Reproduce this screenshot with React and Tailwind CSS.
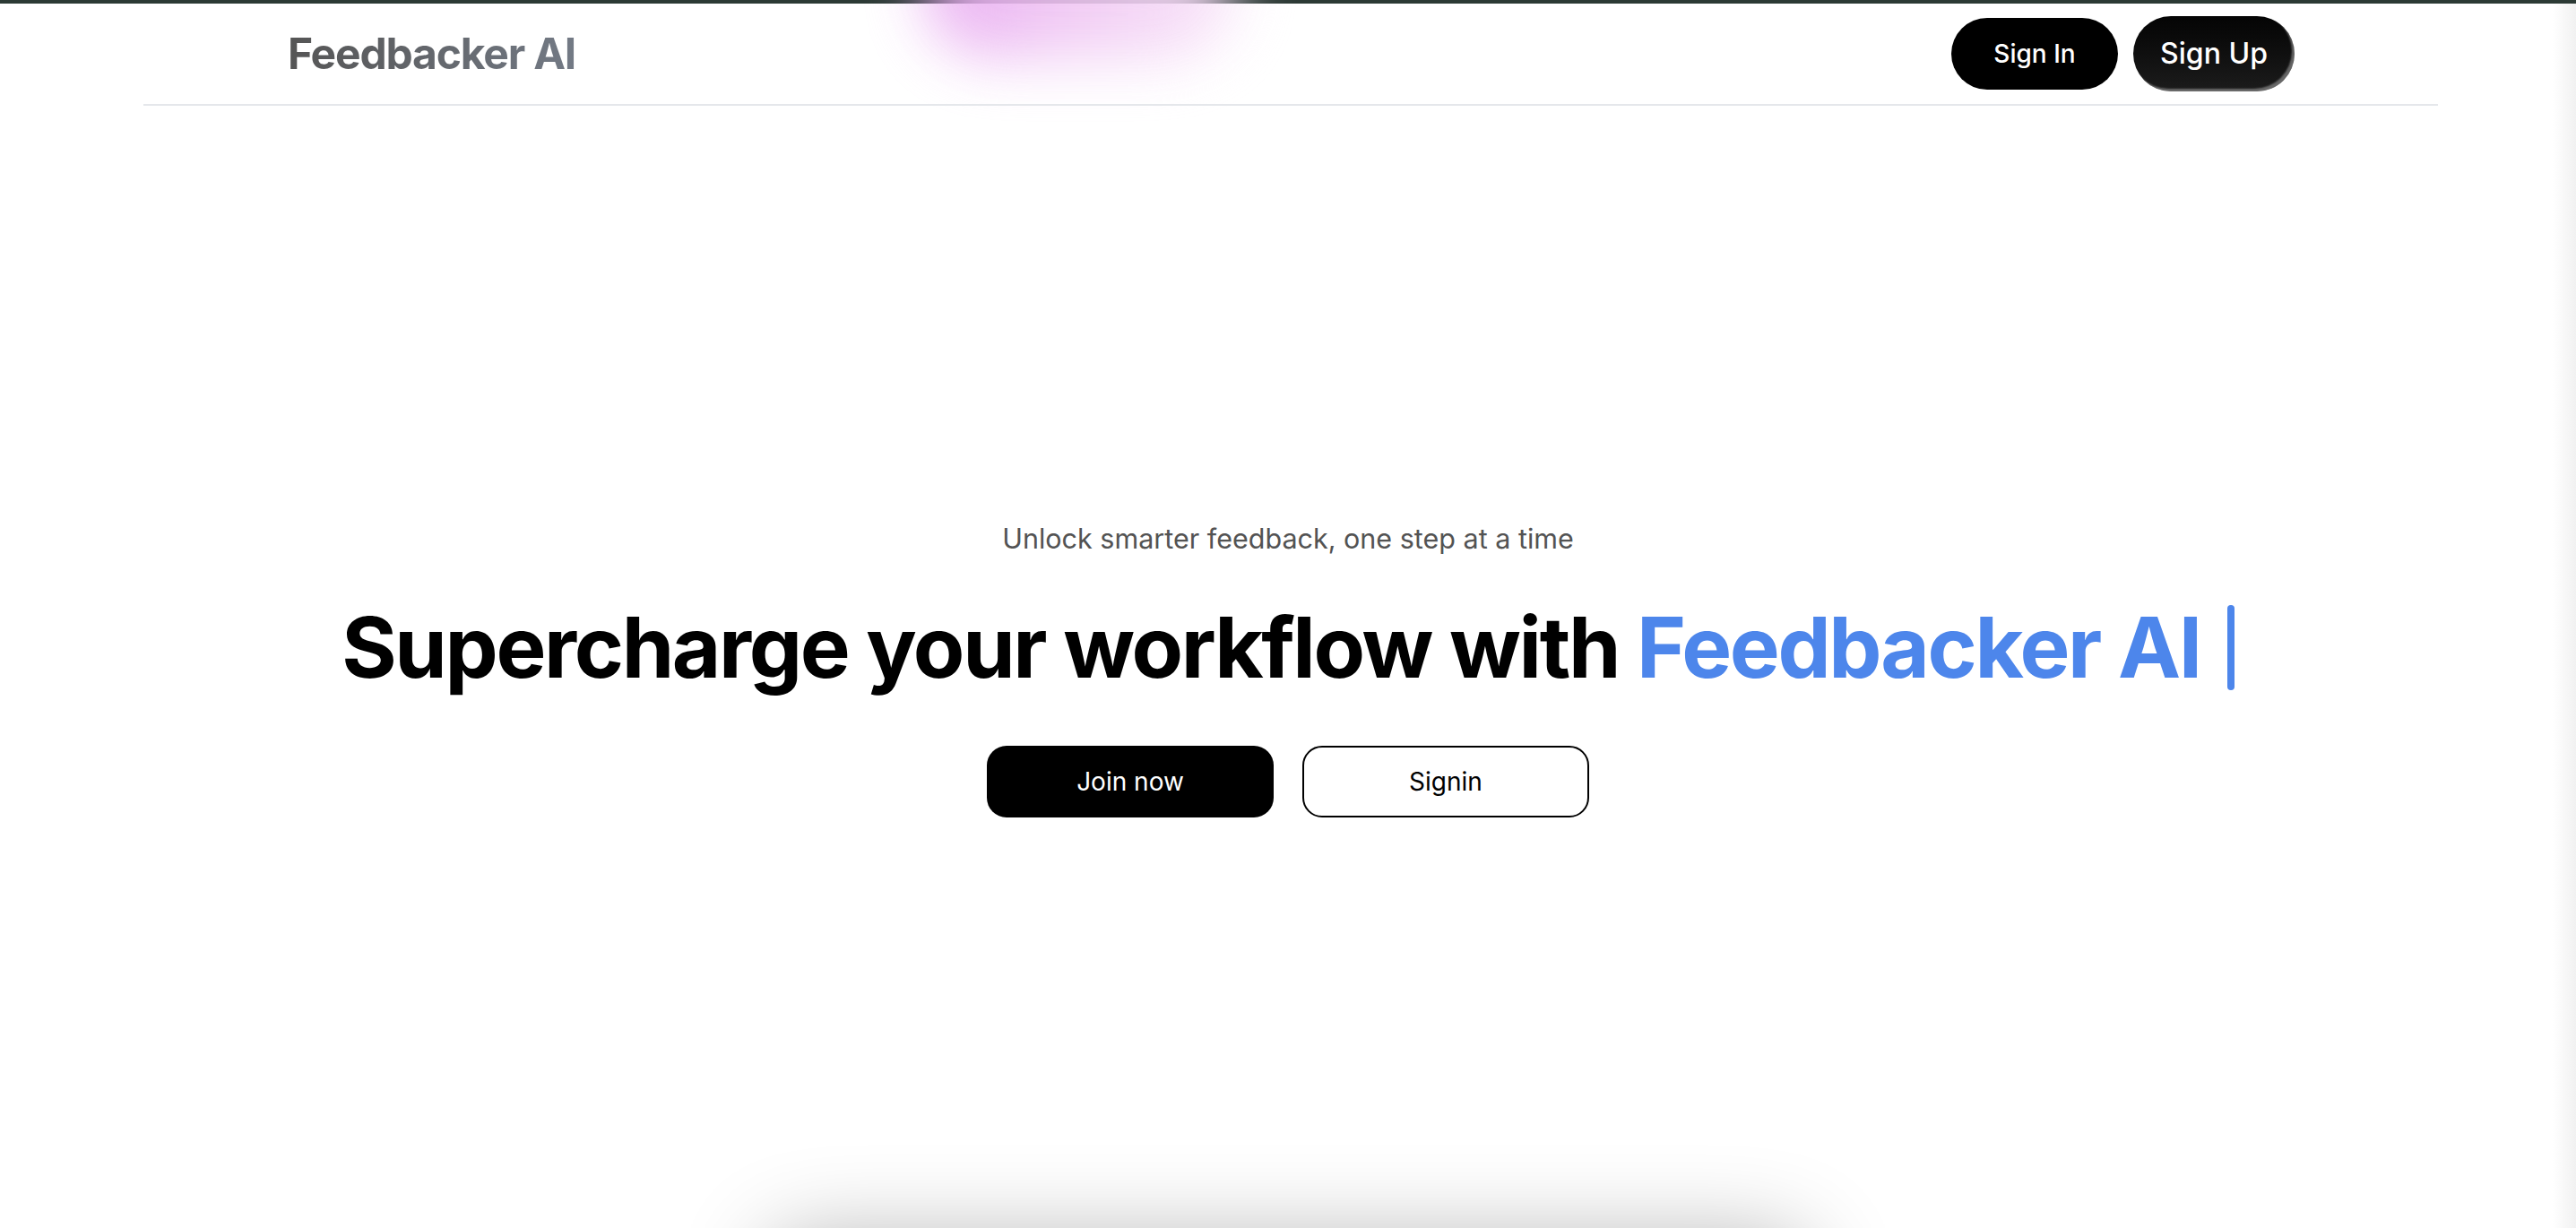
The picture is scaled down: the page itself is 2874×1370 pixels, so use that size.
export default function App() {
  return (
    <div className="relative min-h-screen bg-white overflow-hidden font-['Inter','Liberation_Sans',sans-serif]">
      {/* window chrome strip */}
      <div className="h-[4px] bg-[#2c3a35]" />

      {/* pink glow behind the header */}
      <div className="pointer-events-none absolute left-[1030px] top-[-95px] h-[160px] w-[350px] rounded-full bg-gradient-to-r from-[#e7a6f0] via-[#f0c8f3] to-[#f8e4f8] blur-[32px] opacity-90" />

      <header className="relative w-[2560px] ml-[160px] h-[114px] flex items-center justify-between pl-[161px] pr-[160px] border-b-2 border-[#e5e7eb]">
        <span className="text-[48px] font-bold tracking-tight bg-gradient-to-r from-[#555555] to-[#737a85] bg-clip-text text-transparent">
          Feedbacker AI
        </span>
        <div className="flex items-center gap-[17px]">
          <button className="w-[186px] h-[80px] rounded-full bg-black text-white text-[28px] font-medium">
            Sign In
          </button>
          <button className="w-[180px] h-[84px] rounded-full bg-gradient-to-b from-[#050505] to-[#1c1c1c] text-white text-[32px] font-medium shadow-[inset_-3px_-3px_2px_rgba(255,255,255,0.35)]">
            Sign Up
          </button>
        </div>
      </header>

      <section className="relative flex flex-col items-center pt-[465px]">
        <p className="text-[30.5px] leading-[36px] text-[#535353]">
          Unlock smarter feedback, one step at a time
        </p>
        <h1 className="mt-[46px] flex items-center text-[94px] leading-[115px] font-bold tracking-tight text-black">
          <span>
            Supercharge your workflow with{" "}
            <span className="text-[#4d86eb]">Feedbacker AI</span>
          </span>
          <span className="ml-[30px] inline-block w-[8px] h-[95px] rounded-full bg-[#4d86eb]" />
        </h1>
        <div className="mt-[52px] flex gap-[32px]">
          <button className="w-[320px] h-[80px] rounded-[22px] bg-black text-white text-[28px]">
            Join now
          </button>
          <button className="w-[320px] h-[80px] rounded-[22px] border-2 border-black bg-white text-black text-[28px]">
            Signin
          </button>
        </div>
        {/* card just below the fold, only its shadow shows */}
        <div className="mt-[470px] w-[1160px] h-[500px] rounded-[40px] bg-white shadow-[0_0_100px_rgba(0,0,0,0.3)]" />
      </section>

      {/* faint edge at the right */}
      <div className="pointer-events-none absolute right-0 top-[4px] bottom-0 w-[26px] bg-gradient-to-r from-transparent to-[#f1f1f1]" />
    </div>
  );
}
